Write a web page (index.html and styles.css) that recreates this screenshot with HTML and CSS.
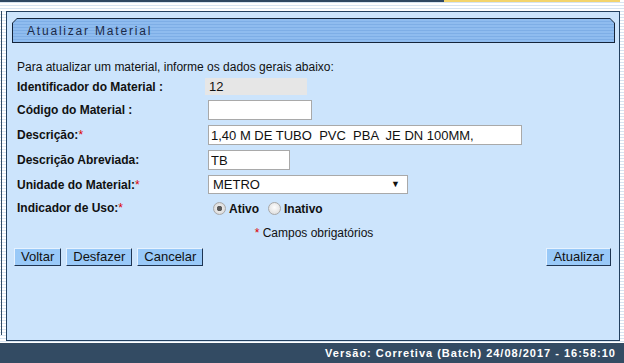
FILE: index.html
```html
<!DOCTYPE html>
<html lang="pt-BR">

<head>
  <meta charset="UTF-8">
  <title>Atualizar Material</title>
  <link rel="stylesheet" href="styles.css">
</head>

<body>
  <div class="topline"></div>

  <div class="frame">
    <div class="panel">
      <div class="title-bar">
        <div class="title-inner">Atualizar Material</div>
      </div>

      <form class="material-form">
        <p class="intro">Para atualizar um material, informe os dados gerais abaixo:</p>

        <div class="grid">
          <label>Identificador do Material :</label>
          <div><input type="text" class="readonly" value="12" readonly></div>

          <label for="codigo">Código do Material :</label>
          <div><input type="text" id="codigo" class="w-code"></div>

          <label for="descricao">Descrição:<span class="req">*</span></label>
          <div><input type="text" id="descricao" class="w-desc" value="1,40 M DE TUBO  PVC  PBA  JE DN 100MM,"></div>

          <label for="abrev">Descrição Abreviada:</label>
          <div><input type="text" id="abrev" class="w-abrev" value="TB"></div>

          <label for="unidade">Unidade do Material:<span class="req">*</span></label>
          <div>
            <span class="select-wrap">
              <select id="unidade">
                <option>METRO</option>
              </select>
            </span>
          </div>

          <label class="top">Indicador de Uso:<span class="req">*</span></label>
          <div class="radios">
            <input type="radio" name="uso" id="ativo" checked><label for="ativo">Ativo</label>
            <input type="radio" name="uso" id="inativo"><label for="inativo">Inativo</label>
          </div>
        </div>

        <p class="note"><span class="req">*</span> Campos obrigatórios</p>

        <div class="buttons">
          <div class="left">
            <button type="button">Voltar</button>
            <button type="button">Desfazer</button>
            <button type="button">Cancelar</button>
          </div>
          <button type="submit">Atualizar</button>
        </div>
      </form>
    </div>
  </div>

  <div class="footer">Versão: Corretiva (Batch) 24/08/2017 - 16:58:10</div>
</body>

</html>
```

FILE: styles.css
```css
body {
  margin: 0;
  width: 624px;
  height: 363px;
  overflow: hidden;
  font-family: "Liberation Sans", Arial, sans-serif;
  font-size: 12px;
  color: #111;
  background: repeating-linear-gradient(#ffffff 0 2px, #d7e4f1 2px 3px);
}

.topline {
  height: 2px;
  background: linear-gradient(to right, #2f4862 0 444px, #f3d46c 444px 620px, transparent 620px);
}

.frame {
  margin: 9px 0 0 1px;
  padding-left: 4px;
  border-left: 1px solid #2f4862;
  height: 324px;
}

.panel {
  width: 612px;
  height: 322px;
  border: 1px solid #23405f;
  background-color: #cce4fc;
  padding-top: 6px;
  box-sizing: content-box;
}

/* title bar with cut corners */
.title-bar {
  margin: 0 4px 0 5px;
  height: 25px;
  background: #14243a;
  clip-path: polygon(5px 0, calc(100% - 5px) 0, 100% 5px, 100% 100%, 0 100%, 0 5px);
  padding: 1px;
  box-sizing: border-box;
}

.title-inner {
  height: 100%;
  background: repeating-linear-gradient(#8fbcef 0 2px, #7eaee6 2px 3px);
  clip-path: polygon(4px 0, calc(100% - 4px) 0, 100% 4px, 100% 100%, 0 100%, 0 4px);
  color: #1b2a48;
  font-size: 12px;
  letter-spacing: 1.8px;
  line-height: 25px;
  padding-left: 14px;
}

.material-form {
  padding: 0 8px 0 10px;
}

.intro {
  margin: 17px 0 4px;
  line-height: 14px;
}

.grid {
  display: grid;
  grid-template-columns: 191px 1fr;
  row-gap: 5px;
  align-items: center;
}

.grid > label {
  font-weight: bold;
}

.grid > label.top {
  align-self: start;
  padding-top: 2px;
}

.req {
  color: #d00;
  font-weight: normal;
}

input[type="text"] {
  font-family: "Liberation Sans", Arial, sans-serif;
  font-size: 13px;
  height: 20px;
  box-sizing: border-box;
  border: 1px solid #a9a9a9;
  background: #fff;
  padding: 0 2px;
  margin: 0;
  color: #111;
}

.readonly {
  border: none !important;
  background: #e6e6e6 !important;
  width: 102px;
  height: 17px !important;
  margin-left: -3px !important;
  padding-left: 4px !important;
}

.w-code { width: 104px; }
.w-desc { width: 314px; }
.w-abrev { width: 82px; }

.select-wrap {
  position: relative;
  display: inline-block;
}

select {
  appearance: none;
  width: 200px;
  height: 19px;
  border: 1px solid #a9a9a9;
  background: #fff;
  font-family: "Liberation Sans", Arial, sans-serif;
  font-size: 13px;
  padding: 0 0 0 4px;
  margin: 0;
  color: #111;
}

.select-wrap::after {
  content: "\25BC";
  position: absolute;
  right: 8px;
  top: 4px;
  font-size: 9px;
  color: #111;
  pointer-events: none;
}

.radios {
  display: flex;
  align-items: center;
  height: 19px;
  font-weight: bold;
}

.radios input {
  appearance: none;
  width: 13px;
  height: 13px;
  margin: 0 3px 0 5px;
  border: 1px solid #a8a8a8;
  border-radius: 50%;
  background: radial-gradient(circle at 50% 40%, #fdfdfd, #d8d8d8);
  box-sizing: border-box;
}

.radios input:checked {
  background: radial-gradient(circle, #5a5a5a 0 2.5px, #e8e8e8 3px, #d0d0d0);
}

.radios label {
  margin-right: 4px;
}

.note {
  text-align: center;
  margin: 8px 0 8px;
  line-height: 14px;
}

.buttons {
  display: flex;
  justify-content: space-between;
  margin-left: -3px;
}

.buttons .left {
  display: flex;
  gap: 5px;
}

button {
  font-family: "Liberation Sans", Arial, sans-serif;
  font-size: 13px;
  color: #111;
  background-color: #99c9f8;
  border: 1px solid;
  border-color: #e6f2ff #1f3552 #1f3552 #e6f2ff;
  height: 18px;
  padding: 0 6px;
  line-height: 16px;
  margin: 0;
}

.footer {
  position: absolute;
  left: 0;
  top: 343px;
  width: 624px;
  height: 20px;
  background-color: #334b63;
  color: #fff;
  font-weight: bold;
  font-size: 11px;
  letter-spacing: 1px;
  line-height: 20px;
  text-align: right;
  padding-right: 8px;
  box-sizing: border-box;
}
```
